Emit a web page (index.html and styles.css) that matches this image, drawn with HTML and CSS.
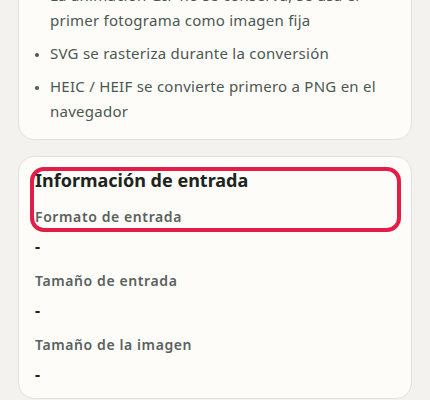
FILE: index.html
```html
<!DOCTYPE html>
<html lang="es">
<head>
<meta charset="utf-8">
<title>Información de entrada</title>
<link rel="stylesheet" href="styles.css">
</head>
<body>
<main class="page">
  <section class="card notes">
    <ul class="note-list">
      <li>La animación GIF no se conserva; se usa el primer fotograma como imagen fija</li>
      <li>SVG se rasteriza durante la conversión</li>
      <li>HEIC / HEIF se convierte primero a PNG en el navegador</li>
    </ul>
  </section>

  <section class="card info">
    <h2 class="info-title">Información de entrada</h2>
    <dl class="info-list">
      <dt>Formato de entrada</dt>
      <dd>-</dd>
      <dt>Tamaño de entrada</dt>
      <dd>-</dd>
      <dt>Tamaño de la imagen</dt>
      <dd>-</dd>
    </dl>
    <div class="focus-ring"></div>
  </section>
</main>
</body>
</html>
```

FILE: styles.css
```css
html, body {
  margin: 0;
  padding: 0;
}

body {
  background: #f3f2ee;
  font-family: "Noto Sans", "Noto Sans CJK JP", sans-serif;
  color: #4b5752;
}

.page {
  display: flex;
  flex-direction: column;
  gap: 16px;
  padding: 0 18px;
  margin-top: -32px;
}

.card {
  position: relative;
  background: #fdfcf8;
  border: 1px solid #e3e1db;
  border-radius: 16px;
}

.notes {
  padding: 14px 16px 15px 16px;
}

.note-list {
  margin: 0;
  padding: 0 0 0 15px;
  font-size: 15px;
  line-height: 25px;
  letter-spacing: 0.25px;
}

.note-list li {
  margin-top: 8px;
}

.note-list li:first-child {
  margin-top: 0;
}

.note-list li::marker {
  font-size: 12px;
  color: #4b5752;
}

.info {
  padding: 11px 16px 14px 16px;
}

.info-title {
  margin: 0;
  font-size: 18px;
  line-height: 25px;
  font-weight: 700;
  color: #1d2420;
}

.info-list {
  margin: 14px 0 0 0;
}

.info-list dt {
  font-size: 14px;
  line-height: 20px;
  font-weight: 600;
  letter-spacing: 0.6px;
  color: #59625e;
}

.info-list dd {
  margin: 9px 0 15px 0;
  font-size: 16px;
  line-height: 20px;
  font-weight: 700;
  color: #1d2420;
}

.info-list dd:last-child {
  margin-bottom: 0;
}

.focus-ring {
  position: absolute;
  left: 11px;
  top: 10px;
  width: 363px;
  height: 57px;
  border: 4px solid #e31c48;
  border-radius: 14px;
  pointer-events: none;
}
```
